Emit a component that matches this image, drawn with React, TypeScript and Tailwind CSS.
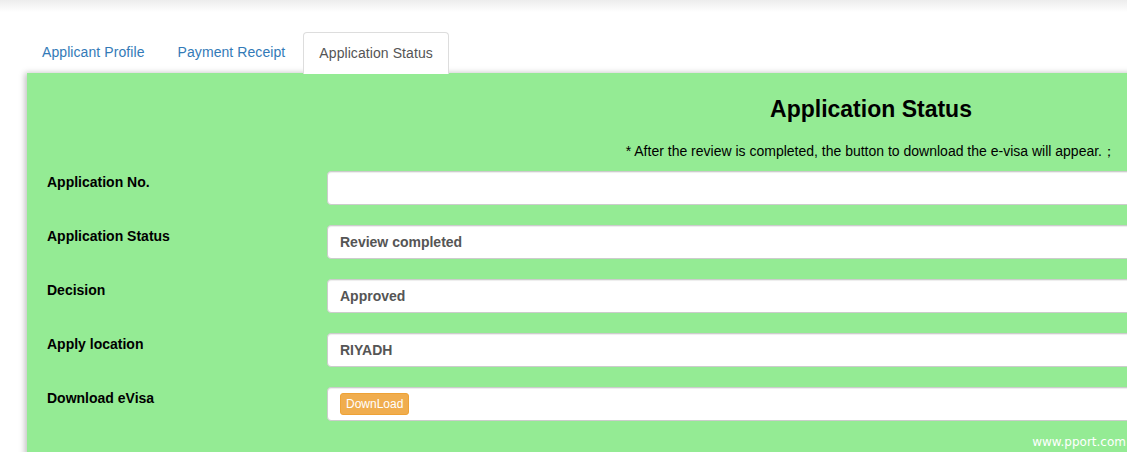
const rows = [
  { label: "Application No.", value: "" },
  { label: "Application Status", value: "Review completed" },
  { label: "Decision", value: "Approved" },
  { label: "Apply location", value: "RIYADH" },
];

export default function App() {
  return (
    <div className="relative h-[452px] w-full overflow-hidden bg-white font-['Liberation_Sans',Arial,sans-serif]">
      <div className="h-[12px] bg-gradient-to-b from-[#ededed] to-white" />

      <ul className="mt-[20px] flex items-end gap-[3px] pl-[27px] text-[14px] tracking-[0.08px]">
        <li>
          <a className="block px-[15px] py-[10px] leading-[21px] text-[#337ab7]">
            Applicant Profile
          </a>
        </li>
        <li>
          <a className="block px-[15px] py-[10px] leading-[21px] text-[#337ab7]">
            Payment Receipt
          </a>
        </li>
        <li>
          <a className="-mb-px block rounded-t-[4px] border border-b-0 border-[#ddd] bg-white px-[15px] py-[10px] leading-[21px] text-[#555]">
            Application Status
          </a>
        </li>
      </ul>

      <div className="ml-[27px] w-[1688px] bg-[#94eb94] pb-[40px] pt-[23px] shadow-[-2px_0_6px_rgba(0,0,0,0.25)]">
        <h1 className="text-center text-[23px] font-bold leading-[26px] text-black">
          Application Status
        </h1>
        <p className="mt-[20px] w-[1089px] text-right text-[14px] leading-[18px] text-black">
          * After the review is completed, the button to download the e-visa will appear.；
        </p>

        <div className="mt-[11px] flex flex-col gap-[20px]">
          {rows.map((r) => (
            <div key={r.label} className="flex items-start">
              <label className="w-[300px] shrink-0 pl-[20px] pt-[1px] text-[14px] font-bold leading-[20px] text-black">
                {r.label}
              </label>
              <div className="flex h-[34px] w-[1200px] items-center rounded-[4px] border border-[#ccc] bg-white px-[12px] text-[14px] font-bold text-[#555] shadow-[inset_0_1px_1px_rgba(0,0,0,0.075)]">
                {r.value}
              </div>
            </div>
          ))}
          <div className="flex items-start">
            <label className="w-[300px] shrink-0 pl-[20px] pt-[1px] text-[14px] font-bold leading-[20px] text-black">
              Download eVisa
            </label>
            <div className="flex h-[34px] w-[1200px] items-center rounded-[4px] border border-[#ccc] bg-white px-[12px] shadow-[inset_0_1px_1px_rgba(0,0,0,0.075)]">
              <button className="rounded-[3px] border border-[#eea236] bg-[#f0ad4e] px-[5px] py-[1px] text-[12px] leading-[18px] text-white">
                DownLoad
              </button>
            </div>
          </div>
        </div>
      </div>

      <span className="absolute bottom-[1px] right-[1px] font-['DejaVu_Sans',sans-serif] text-[12px] text-white">
        www.pport.com
      </span>
    </div>
  );
}
